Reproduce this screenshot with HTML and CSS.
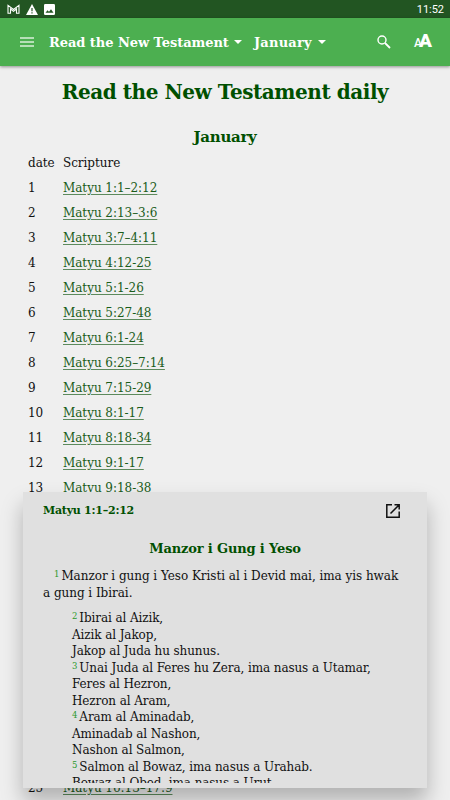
FILE: index.html
```html
<html lang="en">

<head>
  <meta charset="UTF-8">
  <meta name="viewport" content="width=device-width, initial-scale=1.0">
  <title>Read the New Testament daily</title>
  <link rel="stylesheet" href="styles.css">
</head>

<body>
  <div class="status-bar">
    <svg width="13" height="10" viewBox="0 0 13 10" fill="none" stroke="#fff"><path d="M1 9.3V1.3L6.5 5.5L12 1.3V9.3H9.5V5L6.5 7.4L3.5 5V9.3Z" stroke-width="1.1" /></svg>
    <svg width="12" height="11" viewBox="0 0 12 11"><path d="M6 0L12 11H0Z" fill="#fff" /><path d="M6 4V7.3M6 8.3V9.6" stroke="#225522" stroke-width="1.2" /></svg>
    <svg width="11" height="11" viewBox="0 0 11 11"><rect width="11" height="11" rx="1.2" fill="#fff" /><path d="M1.5 8.8L3.5 6.2L5 7.8L7 5.3L9.5 8.8Z" fill="#225522" /></svg>
    <span class="clock">11:52</span>
  </div>
  <div class="toolbar">
    <svg class="menu-icon" width="14" height="10" viewBox="0 0 14 10"><path d="M0 1H14M0 5H14M0 9H14" stroke="#d9f0d9" stroke-width="1.5" /></svg>
    <div class="picker book">Read the New Testament</div>
    <div class="picker month">January</div>
    <svg class="search-icon" width="14" height="14" viewBox="0 0 14 14" fill="none" stroke="#fff"><circle cx="5" cy="5" r="4" stroke-width="1.4" /><path d="M8 8L13 13" stroke-width="1.8" /></svg>
    <div class="text-size"><span class="small-a">A</span><span class="big-a">A</span></div>
  </div>

  <div class="content">
    <h1>Read the New Testament daily</h1>
    <h2>January</h2>
    <div class="plan">
      <div class="row"><span>date</span><span>Scripture</span></div>
      <div class="row"><span>1</span><a href="#">Matyu 1:1–2:12</a></div>
      <div class="row"><span>2</span><a href="#">Matyu 2:13–3:6</a></div>
      <div class="row"><span>3</span><a href="#">Matyu 3:7–4:11</a></div>
      <div class="row"><span>4</span><a href="#">Matyu 4:12-25</a></div>
      <div class="row"><span>5</span><a href="#">Matyu 5:1-26</a></div>
      <div class="row"><span>6</span><a href="#">Matyu 5:27-48</a></div>
      <div class="row"><span>7</span><a href="#">Matyu 6:1-24</a></div>
      <div class="row"><span>8</span><a href="#">Matyu 6:25–7:14</a></div>
      <div class="row"><span>9</span><a href="#">Matyu 7:15-29</a></div>
      <div class="row"><span>10</span><a href="#">Matyu 8:1-17</a></div>
      <div class="row"><span>11</span><a href="#">Matyu 8:18-34</a></div>
      <div class="row"><span>12</span><a href="#">Matyu 9:1-17</a></div>
      <div class="row"><span>13</span><a href="#">Matyu 9:18-38</a></div>
      <div class="row last"><span>25</span><a href="#">Matyu 16:13–17:9</a></div>
    </div>
  </div>

  <div class="popup">
    <div class="popup-header">
      <span>Matyu 1:1–2:12</span>
      <svg width="14" height="14" viewBox="0 0 14 14" fill="none" stroke="#111" stroke-width="1.5"><path d="M6 .8H.8V13.2H13.2V7.5M8.5 .8H13.2V5.5M13 1L4.5 9.5" /></svg>
    </div>
    <div class="passage">
      <h3>Manzor i Gung i Yeso</h3>
      <p><sup>1</sup>Manzor i gung i Yeso Kristi al i Devid mai, ima yis hwak<br>a gung i Ibirai.</p>
      <div class="verses">
        <div><sup>2</sup>Ibirai al Aizik,</div>
        <div>Aizik al Jakop,</div>
        <div>Jakop al Juda hu shunus.</div>
        <div><sup>3</sup>Unai Juda al Feres hu Zera, ima nasus a Utamar,</div>
        <div>Feres al Hezron,</div>
        <div>Hezron al Aram,</div>
        <div><sup>4</sup>Aram al Aminadab,</div>
        <div>Aminadab al Nashon,</div>
        <div>Nashon al Salmon,</div>
        <div><sup>5</sup>Salmon al Bowaz, ima nasus a Urahab.</div>
        <div>Bowaz al Obed, ima nasus a Urut.</div>
      </div>
    </div>
  </div>
</body>

</html>
```
FILE: styles.css
```css
* {
  box-sizing: border-box;
}

body {
  margin: 0;
  height: 800px;
  overflow: hidden;
  position: relative;
  background-color: #efefef;
  color: #111;
  font-family: "DejaVu Serif", serif;
  font-size: 12px;
  letter-spacing: -0.04px;
}

.status-bar {
  height: 18px;
  padding: 0 6px 0 7px;
  display: flex;
  align-items: center;
  gap: 6px;
  background-color: #225522;
}

.clock {
  margin-left: auto;
  color: white;
  font-family: Roboto, sans-serif;
  font-size: 11px;
}

.toolbar {
  height: 48px;
  padding-left: 20px;
  padding-right: 18px;
  display: flex;
  align-items: center;
  background-color: #4caf50;
  color: white;
  font-weight: bold;
  font-size: 13px;
  letter-spacing: -0.05px;
  box-shadow: 0 1px 3px rgba(0, 0, 0, 0.4);
}

.picker {
  display: flex;
  align-items: center;
  white-space: nowrap;
}

.picker::after {
  content: "";
  margin-left: auto;
  border: 4px solid transparent;
  border-top-color: white;
  border-bottom: none;
}

.book {
  width: 193px;
  margin-left: 15px;
}

.month {
  width: 72px;
  margin-left: 12px;
  letter-spacing: 0.2px;
}

.search-icon {
  margin-left: auto;
}

.text-size {
  margin-left: 23px;
  font-family: Roboto, sans-serif;
  line-height: 20px;
  letter-spacing: 0;
}

.small-a {
  font-size: 12px;
  font-weight: 500;
}

.big-a {
  font-size: 19px;
  font-weight: 900;
  margin-left: -3px;
}

h1,
h2,
h3 {
  margin: 0;
  color: #005000;
  text-align: center;
  white-space: nowrap;
}

h1 {
  padding-top: 10px;
  font-size: 20px;
  letter-spacing: -0.45px;
  line-height: 32px;
}

h2 {
  padding-top: 18px;
  font-size: 15px;
  letter-spacing: -0.3px;
  line-height: 22px;
}

.plan {
  padding: 3px 0 0 28px;
}

.row {
  height: 25px;
  line-height: 25px;
  display: grid;
  grid-template-columns: 35px 1fr;
  justify-items: start;
  white-space: nowrap;
}

.row a {
  color: #1a5c1a;
  text-decoration-color: #5c8a5c;
  text-underline-offset: 2px;
}

/* dates 14 to 24 sit behind the popup */
.last {
  margin-top: 275px;
}

.popup {
  position: absolute;
  left: 23px;
  top: 492px;
  width: 404px;
  height: 296px;
  padding: 10px 20px 5px;
  background-color: #e0e0e0;
  box-shadow: 0 13px 20px rgba(0, 0, 0, 0.26);
}

.popup-header {
  height: 17px;
  padding-right: 7px;
  display: flex;
  justify-content: space-between;
  align-items: center;
  color: #005000;
  font-weight: bold;
  font-size: 11px;
  letter-spacing: -0.25px;
}

.passage {
  height: 264px;
  overflow: hidden;
  white-space: nowrap;
  line-height: 16.5px;
}

h3 {
  padding-top: 20px;
  font-size: 13px;
  letter-spacing: -0.15px;
  line-height: 20px;
}

p {
  margin: 9px 0 9.4px;
  text-indent: 11px;
}

.verses {
  padding-left: 29px;
  letter-spacing: -0.1px;
}

sup {
  margin-right: 2px;
  color: #2c992c;
  font-size: 8.5px;
  line-height: 0;
  vertical-align: 3px;
}
```
